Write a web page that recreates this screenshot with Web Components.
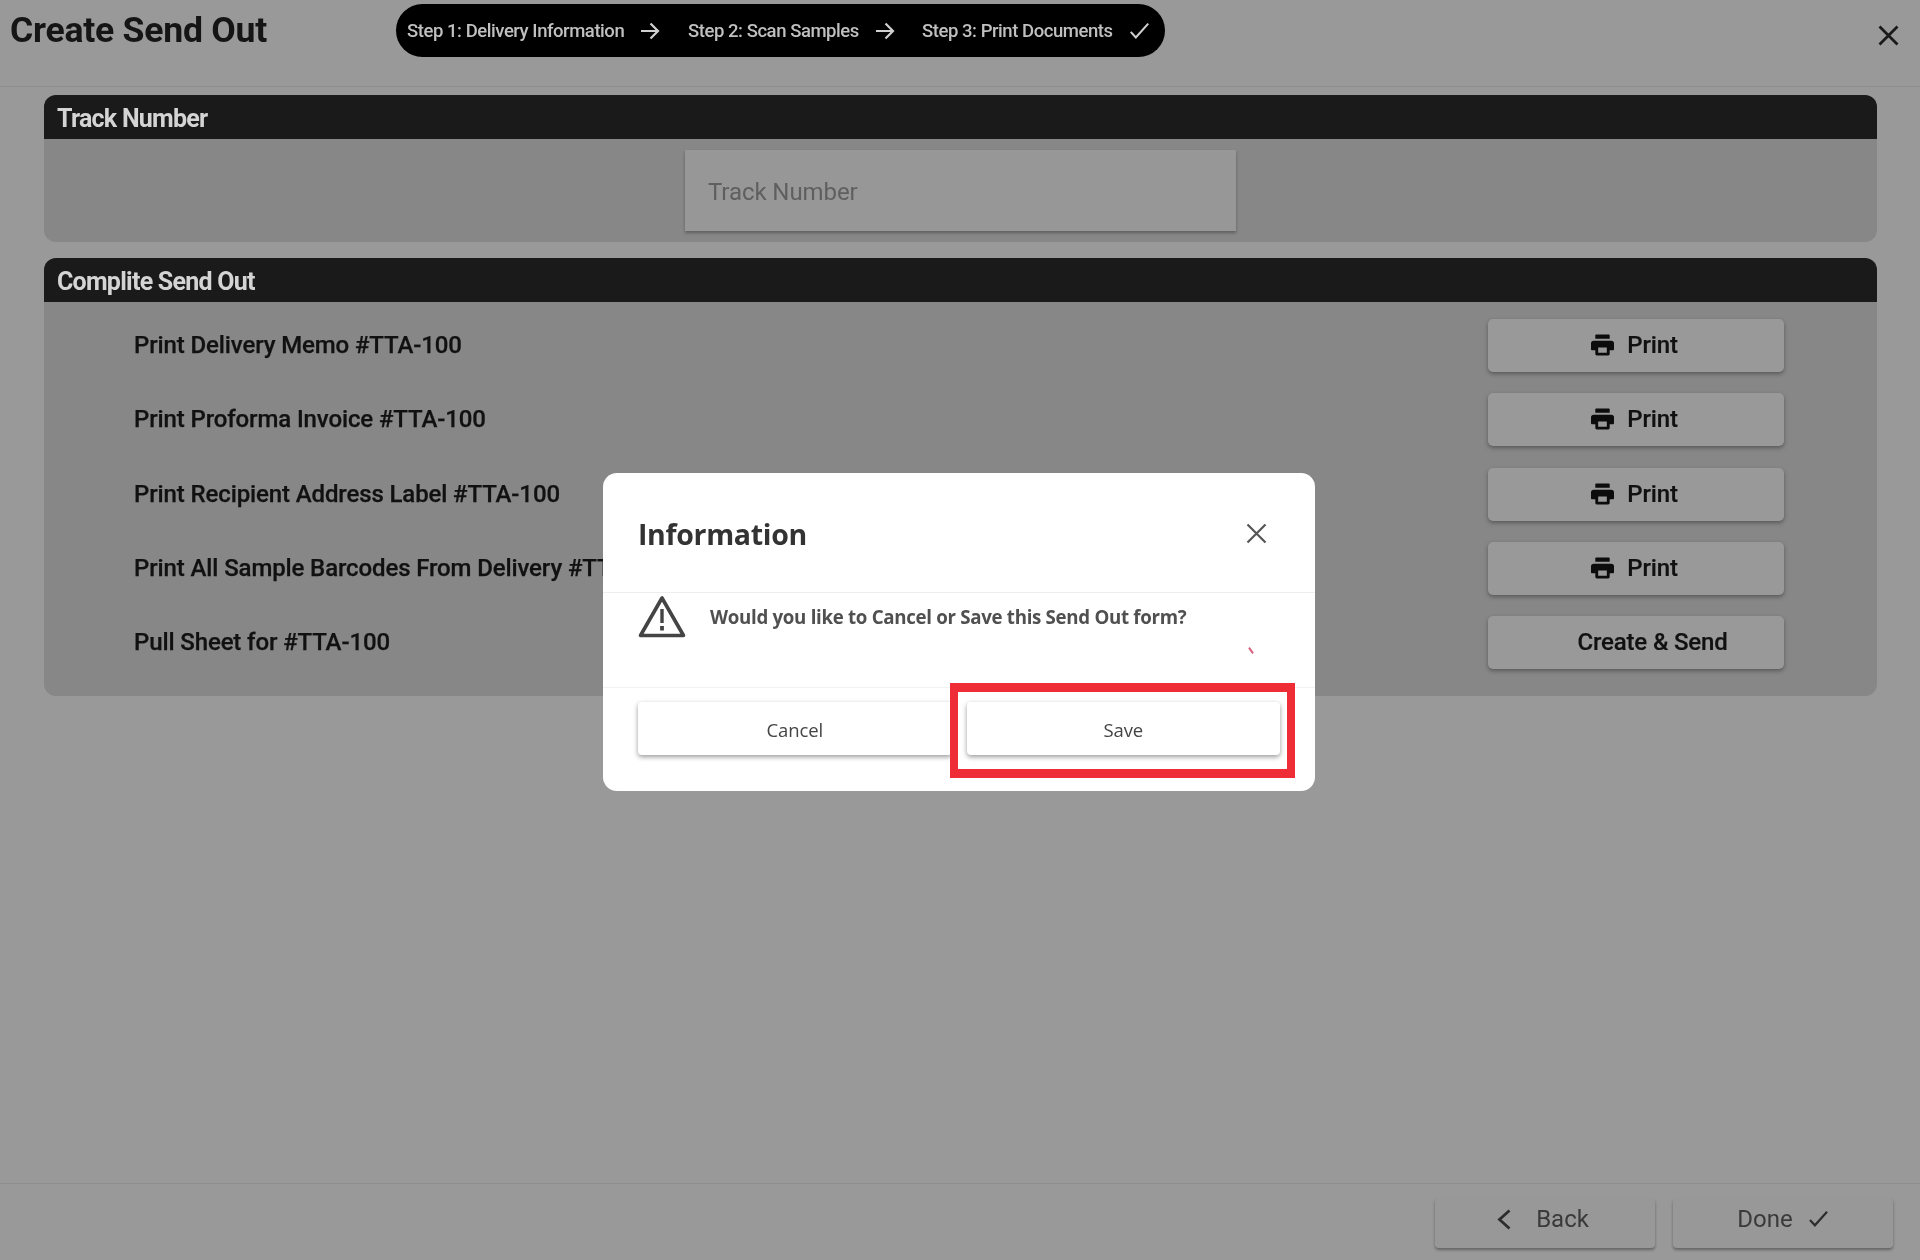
<!DOCTYPE html>
<html lang="en"><head><meta charset="utf-8"><title>Create Send Out</title>
<style>
html,body{margin:0;padding:0;background:#999;}
body{font-family:Roboto,"Liberation Sans",sans-serif;}
</style></head><body>
<send-out-page>
  <so-header slot="header"></so-header>
  <so-panel title-text="Track Number" kind="track"><track-input placeholder="Track Number"></track-input></so-panel>
  <so-panel title-text="Complite Send Out" kind="rows">
    <so-row label="Print Delivery Memo #TTA-100"><so-button icon="print">Print</so-button></so-row>
    <so-row label="Print Proforma Invoice #TTA-100"><so-button icon="print">Print</so-button></so-row>
    <so-row label="Print Recipient Address Label #TTA-100"><so-button icon="print">Print</so-button></so-row>
    <so-row label="Print All Sample Barcodes From Delivery #TTA-100"><so-button icon="print">Print</so-button></so-row>
    <so-row label="Pull Sheet for #TTA-100"><so-button icon="blank">Create &amp; Send</so-button></so-row>
  </so-panel>
  <so-footer slot="footer"></so-footer>
</send-out-page>
<info-dialog></info-dialog>
<script>
const ICON={
 print:'<svg width="23" height="22" viewBox="0 0 24 22" fill="currentColor"><path d="M5.500 0h13a1 1 0 0 1 1 1v3.500h-15V1a1 1 0 0 1 1-1z"/><path fill-rule="evenodd" d="M3 6.500h18a3 3 0 0 1 3 3v6a1 1 0 0 1-1 1h-3.500v4a1.500 1.500 0 0 1-1.500 1.500H6a1.500 1.500 0 0 1-1.500-1.500v-4H1a1 1 0 0 1-1-1v-6a3 3 0 0 1 3-3zM7.500 13.500v5.500h9v-5.500z"/></svg>',
 arrow:'<svg width="20" height="20" viewBox="0 0 20 20" fill="none" stroke="currentColor" stroke-width="2.200"><path d="M1 10h17M10.500 2.500 18 10l-7.500 7.500"/></svg>',
 check:'<svg width="21" height="18" viewBox="0 0 21 18" fill="none" stroke="currentColor" stroke-width="2.200"><path d="M1 10l5.500 6L20 1"/></svg>',
 close:'<svg width="21" height="21" viewBox="0 0 21 21" fill="none" stroke="currentColor" stroke-width="2.800"><path d="M1.500 1.500l18 18M19.500 1.500l-18 18"/></svg>',
 back:'<svg width="14" height="21" viewBox="0 0 14 21" fill="none" stroke="currentColor" stroke-width="2.800"><path d="M12.500 1.500 2.500 10.500l10 9"/></svg>',
 warn:'<svg width="48" height="43" viewBox="0 0 48 43" fill="none" stroke="#444"><path d="M24 3 2.500 40.500h43z" stroke-width="3.600" stroke-linejoin="round"/><path d="M24 14v14" stroke-width="3.400"/><path d="M24 31v4.500" stroke-width="3.800"/></svg>'
};
function def(name,css,html){
  customElements.define(name,class extends HTMLElement{
    constructor(){super();this.attachShadow({mode:'open'});}
    connectedCallback(){
      const a=n=>this.getAttribute(n)||'';
      this.shadowRoot.innerHTML='<style>'+css+'</style>'+(typeof html==='function'?html(a):html);
    }
  });
}
def('send-out-page',`
 :host{display:flex;flex-direction:column;width:1920px;height:1260px;background:#999;filter:blur(.7px);}
 main{flex:1;display:flex;flex-direction:column;gap:16px;padding:8px 43px 0 44px;}
`,`<slot name="header"></slot><main><slot></slot></main><slot name="footer"></slot>`);
def('so-header',`
 :host{display:flex;align-items:center;height:86px;border-bottom:1px solid #8e8e8e;box-sizing:content-box;color:#151515;}
 h1{margin:0 0 1px 10px;width:386px;font:700 35.600px/1 Roboto,sans-serif;letter-spacing:-.25px;align-self:flex-start;padding-top:13px;white-space:nowrap}
 .pill{align-self:flex-start;margin-top:4px;display:flex;align-items:center;width:769px;height:53px;box-sizing:border-box;padding:2px 0 0 11px;background:#000;border-radius:27px;color:#c0c0c0;font:500 18.500px/1 Roboto,sans-serif;letter-spacing:-.45px;white-space:nowrap}
 .pill span{display:inline-block}
 .pill i{display:flex;color:#d0d0d0;position:relative;top:-1px}
 .s1{width:218px;margin-right:15px}.s2{width:173px;margin-right:14px}.s3{width:192px;margin-right:15px}
 .a1{margin-right:28px}.a2{margin-right:27px}
 .x{margin-left:auto;margin-right:21px;align-self:center;display:flex;color:#1a1a1a;transform:translateY(-8px)}
`,()=>`<h1>Create Send Out</h1>
 <div class="pill"><span class="s1">Step 1: Delivery Information</span><i class="a1">${ICON.arrow}</i><span class="s2">Step 2: Scan Samples</span><i class="a2">${ICON.arrow}</i><span class="s3">Step 3: Print Documents</span><i style="transform:scale(.92)">${ICON.check}</i></div>
 <div class="x">${ICON.close}</div>`);
def('so-panel',`
 :host{display:block;background:#878787;border-radius:12px;overflow:hidden;}
 header{height:44px;background:#1a1a1a;color:#d4d4d4;font:700 25px/48px Roboto,sans-serif;letter-spacing:-.75px;padding-left:13px;overflow:hidden}
 .track{display:flex;justify-content:center;height:103px;padding:11px 0 0;box-sizing:border-box;}
 .rows{display:flex;flex-direction:column;gap:21.300px;padding:17px 93px 27px 90px;}
`,a=>`<header>${a('title-text')}</header><div class="${a('kind')}"><slot></slot></div>`);
def('track-input',`
 :host{display:flex;align-items:center;width:551px;height:81px;box-sizing:border-box;padding:2px 0 0 23px;background:#979797;box-shadow:0 2px 3px rgba(0,0,0,.3);color:#5f5f5f;font:400 24px/1 Roboto,sans-serif;letter-spacing:-.08px}
`,a=>`<span>${a('placeholder')}</span>`);
def('so-row',`
 :host{display:flex;align-items:center;justify-content:space-between;height:53px;color:#111;font:500 24px/1 Roboto,sans-serif;letter-spacing:-.12px;white-space:nowrap;-webkit-text-stroke:.25px #111}
 span{position:relative;top:-.5px}
`,a=>`<span>${a('label')}</span><slot></slot>`);
def('so-button',`
 :host{display:flex;align-items:center;justify-content:center;gap:13px;width:296px;height:53px;box-sizing:border-box;padding:0 3px 1px 0;background:#999;border-radius:5px;box-shadow:0 2px 4px rgba(0,0,0,.35);color:#111;font:500 24px/1 Roboto,sans-serif;letter-spacing:-.15px;-webkit-text-stroke:.2px #111}
 i{display:flex;width:23px;height:22px;color:#0c0c0c}
`,a=>`<i>${a('icon')==='print'?ICON.print:''}</i><span><slot></slot></span>`);
def('so-footer',`
 :host{display:flex;justify-content:flex-end;gap:18px;height:77px;border-top:1px solid #8e8e8e;padding:14px 27px 0 0;box-sizing:border-box;color:#3a3a3a;font:400 24px/1 Roboto,sans-serif;}
 div{display:flex;align-items:center;justify-content:center;width:220px;height:50px;box-sizing:border-box;padding-bottom:8px;border-radius:4px;background:#989898;box-shadow:0 2px 3px rgba(0,0,0,.35);gap:25px;}
 .b{padding-right:4px}
 .d{gap:15px}
 svg{flex:none;color:#2c2c2c}
`,`<div class="b"><span style="display:flex">${ICON.back}</span><span>Back</span></div><div class="d"><span>Done</span><span style="display:flex;transform:scale(.9)"><svg width="21" height="18" viewBox="0 0 21 18" fill="none" stroke="currentColor" stroke-width="2.400"><path d="M1 10l5.500 6L20 1"/></svg></span></div>`);
def('info-dialog',`
 :host{position:absolute;left:603px;top:473px;width:712px;height:318px;display:flex;flex-direction:column;background:#fff;border-radius:14px;filter:blur(.6px);font-family:"Open Sans","Noto Sans",sans-serif;color:#333;}
 .head{display:flex;align-items:center;justify-content:space-between;height:120px;box-sizing:border-box;padding:0 48px 0 35px;border-bottom:1px solid #eee;}
 h2{margin:0;font:700 28.500px/1 "Open Sans",sans-serif;letter-spacing:-.32px;color:#333;position:relative;top:2px}
 .head svg{display:block;position:relative;top:1px}
 .body{display:flex;align-items:flex-start;gap:24px;height:95px;box-sizing:border-box;padding:2px 35px 0;border-bottom:1px solid #f2f2f2;}
 .msg{font:700 18.700px/1 "Open Sans",sans-serif;letter-spacing:-.3px;color:#505050;margin-top:13px;white-space:nowrap}
 .foot{display:flex;gap:15px;padding:14px 35px 0;}
 .btn{flex:1;display:flex;align-items:center;justify-content:center;height:53px;padding-top:3px;box-sizing:border-box;background:#fff;border-radius:4px;box-shadow:0 2px 5px rgba(0,0,0,.4);font:400 18.500px/1 "Open Sans",sans-serif;letter-spacing:-.1px;color:#444}
 .mark{position:absolute;left:647px;top:174px;width:2px;height:7px;background:#d8607e;transform:rotate(-35deg)}
 .red{position:absolute;left:347px;top:210px;width:345px;height:95px;box-sizing:border-box;border-style:solid;border-color:#ee2d37;border-width:9px 8.500px;}
`,()=>`<div class="head"><h2>Information</h2><svg width="21" height="21" viewBox="0 0 21 21" fill="none" stroke="#555" stroke-width="2.200"><path d="M1.500 1.500l18 18M19.500 1.500l-18 18"/></svg></div>
 <div class="body">${ICON.warn}<div class="msg">Would you like to Cancel or Save this Send Out form?</div></div>
 <div class="foot"><div class="btn">Cancel</div><div class="btn">Save</div></div>
 <div class="mark"></div><div class="red"></div>`);
</script>
</body></html>
